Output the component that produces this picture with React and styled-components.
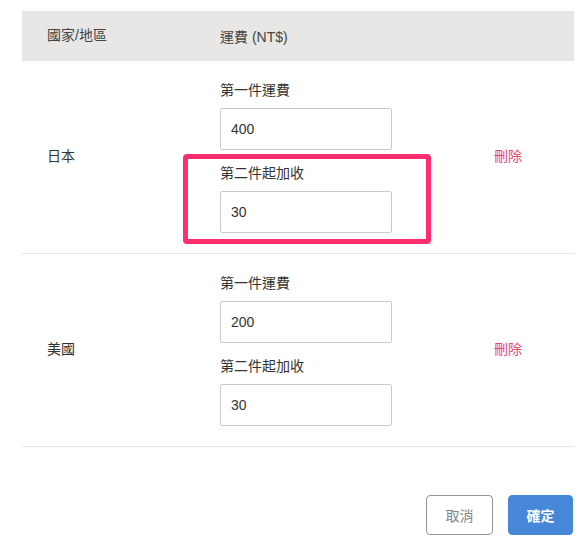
import styled, { createGlobalStyle } from "styled-components"

const Global = createGlobalStyle`
  body {
    margin: 0;
    background: #fff;
    font-family: "Liberation Sans", "Noto Sans CJK TC", sans-serif;
    font-size: 14px;
    color: #333;
  }
`

const Page = styled.div`
  padding: 11px 14px 0 22px;
`

const Table = styled.div`
  width: 552px;
`

const Grid = styled.div`
  display: grid;
  grid-template-columns: 198px 274px 1fr;
  align-items: center;
`

const Header = styled(Grid)`
  height: 50px;
  background: #e8e7e5;
  color: #444;
`

const Row = styled(Grid)`
  padding: 20px 0;
  border-bottom: 1px solid #e6e6e6;
`

const Country = styled.div`
  padding-left: 25px;
  line-height: 18px;
  margin-top: -2px;
`

const Fields = styled.div`
  display: flex;
  flex-direction: column;
  gap: 14px;
`

const Field = styled.div`
  position: relative;
  display: flex;
  flex-direction: column;
  gap: 9px;
`

const Label = styled.div`
  line-height: 18px;
  color: #333;
`

const Input = styled.input`
  box-sizing: border-box;
  width: 172px;
  height: 42px;
  padding: 0 10px;
  border: 1px solid #cacaca;
  border-radius: 2px;
  font: inherit;
  font-size: 14px;
  color: #333;
  outline: none;
`

const Highlight = styled.div`
  position: absolute;
  left: -37px;
  top: -10px;
  width: 248px;
  height: 90px;
  box-sizing: border-box;
  border: 5px solid #ff2e6f;
  border-radius: 4px;
  pointer-events: none;
`

const Delete = styled.div`
  color: #e8456d;
  line-height: 18px;
  margin-top: -2px;
`

const Actions = styled.div`
  display: flex;
  justify-content: flex-end;
  gap: 15px;
  margin-top: 48px;
  padding-right: 1px;
`

const Button = styled.button`
  box-sizing: border-box;
  height: 40px;
  width: ${p => p.$w}px;
  border-radius: 4px;
  font: inherit;
  font-size: 14px;
  cursor: pointer;
  border: 1px solid ${p => (p.$primary ? "#4687d8" : "#8d969b")};
  background: ${p => (p.$primary ? "#4687d8" : "#fff")};
  color: ${p => (p.$primary ? "#fff" : "#7d868b")};
  font-weight: ${p => (p.$primary ? 700 : 400)};
`

const rows = [
  { country: "日本", first: "400", extra: "30", marked: true },
  { country: "美國", first: "200", extra: "30" },
]

export default function App() {
  return (
    <>
      <Global />
      <Page>
        <Table>
          <Header>
            <Country>國家/地區</Country>
            <div>運費 (NT$)</div>
            <div />
          </Header>
          {rows.map(r => (
            <Row key={r.country}>
              <Country>{r.country}</Country>
              <Fields>
                <Field>
                  <Label>第一件運費</Label>
                  <Input defaultValue={r.first} />
                </Field>
                <Field>
                  {r.marked && <Highlight />}
                  <Label>第二件起加收</Label>
                  <Input defaultValue={r.extra} />
                </Field>
              </Fields>
              <Delete>刪除</Delete>
            </Row>
          ))}
          <Actions>
            <Button $w={67}>取消</Button>
            <Button $w={65} $primary>確定</Button>
          </Actions>
        </Table>
      </Page>
    </>
  )
}
